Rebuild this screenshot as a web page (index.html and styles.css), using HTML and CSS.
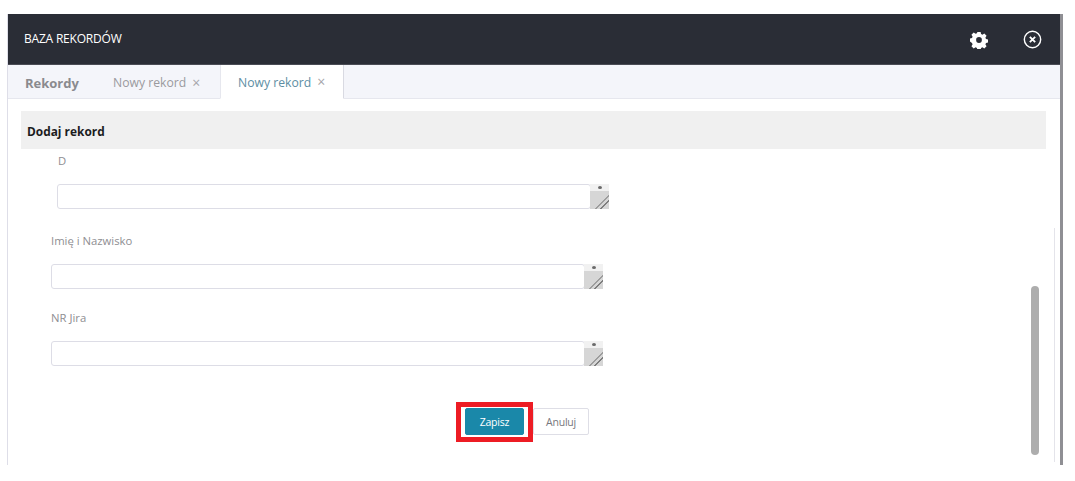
FILE: index.html
```html
<!DOCTYPE html>
<html lang="pl">
<head>
<meta charset="utf-8">
<title>Baza rekordów</title>
<link rel="stylesheet" href="styles.css">
</head>
<body>
<main class="window">
  <header class="topbar">
    <h1 class="title">BAZA REKORDÓW</h1>
    <div class="actions">
      <svg class="icon gear" viewBox="0 0 20 20" aria-label="Ustawienia">
        <path fill="#fff" fill-rule="evenodd" d="M8.2 1h3.6l.5 2.4 1.5.7 2.1-1.3 2.5 2.5-1.3 2.1.7 1.5 2.2.5v3.4l-2.2.5-.7 1.5 1.3 2.1-2.5 2.5-2.1-1.3-1.5.7-.5 2.2H8.2l-.5-2.2-1.5-.7-2.1 1.3-2.5-2.5 1.3-2.1-.7-1.5L0 11.8V8.4l2.2-.5.7-1.5-1.3-2.1 2.5-2.5 2.1 1.3 1.5-.7zM10 6.8a3.2 3.2 0 1 0 0 6.4 3.2 3.2 0 0 0 0-6.4z"/>
      </svg>
      <svg class="icon close" viewBox="0 0 20 20" aria-label="Zamknij">
        <circle cx="10" cy="10" r="8.6" fill="none" stroke="#fff" stroke-width="1.5"/>
        <path d="M7.2 7.2l5.6 5.6M12.8 7.2l-5.6 5.6" fill="none" stroke="#fff" stroke-width="1.9"/>
      </svg>
    </div>
  </header>
  <nav class="tabs">
    <span class="tab tab-main">Rekordy</span>
    <span class="tab tab-idle">Nowy rekord <span class="x">×</span></span>
    <span class="tab tab-active">Nowy rekord <span class="x">×</span></span>
  </nav>
  <section class="content">
    <h2 class="section-title">Dodaj rekord</h2>
    <div class="field field-d">
      <label class="label label-d">D</label>
      <div class="input-row">
        <div class="input"></div>
        <div class="spin"><i class="dot"></i><div class="grip"></div></div>
      </div>
    </div>
    <div class="field field-name">
      <label class="label">Imię i Nazwisko</label>
      <div class="input-row">
        <div class="input"></div>
        <div class="spin"><i class="dot"></i><div class="grip"></div></div>
      </div>
    </div>
    <div class="field field-jira">
      <label class="label">NR Jira</label>
      <div class="input-row">
        <div class="input"></div>
        <div class="spin"><i class="dot"></i><div class="grip"></div></div>
      </div>
    </div>
    <div class="buttons">
      <span class="highlight"><button class="btn btn-primary">Zapisz</button></span>
      <button class="btn btn-plain">Anuluj</button>
    </div>
    <div class="track"></div>
    <div class="thumb"></div>
  </section>
</main>
</body>
</html>
```
FILE: styles.css
```css
* { box-sizing: border-box; }
html, body { margin: 0; height: 100%; background: #fff; overflow: hidden; }
body { font-family: "Open Sans", "Liberation Sans", sans-serif; padding: 14px 0 0 7px; }

.window {
  width: 1056px;
  height: 451px;
  border-left: 1px solid #dedee8;
  border-right: 3px solid #8f8f94;
  display: flex;
  flex-direction: column;
}

.topbar {
  height: 51px;
  flex: none;
  background: #2a2d36;
  border-bottom: 1px solid #4a4c55;
  display: flex;
  align-items: center;
  justify-content: space-between;
  padding: 0 18px 2px 16px;
}
.title { margin: 0; font-size: 12px; font-weight: 400; color: #fff; letter-spacing: -0.2px; }
.actions { display: flex; align-items: center; gap: 35px; }
.icon { display: block; }
.gear { width: 18px; height: 18px; margin-top: 4px; }
.close { width: 19px; height: 19px; margin-top: 2px; }

.tabs {
  height: 34px;
  flex: none;
  background: #f4f5fa;
  border-bottom: 1px solid #e6e7ee;
  display: flex;
  font-size: 12.2px;
  color: #9a9a9e;
}
.tab { display: flex; align-items: center; gap: 6px; height: 34px; white-space: nowrap; padding-top: 1px; }
.tab-main { font-weight: 700; font-size: 13px; color: #8a8a8e; padding-left: 17px; width: 105px; }
.tab-idle { width: 107px; }
.tab-active {
  width: 124px;
  padding-left: 17px;
  background: #fff;
  color: #5d8ea3;
  border-left: 1px solid #e6e7ee;
  border-right: 1px solid #d9dae2;
  border-bottom: 1px solid #fff;
}
.x { font-size: 14px; color: #a6a6aa; line-height: 1; }

.content { position: relative; flex: 1; padding: 12px 14px 0 13px; }
.section-title {
  margin: 0;
  height: 38px;
  width: 1025px;
  background: #f0f0f0;
  font-size: 11.9px;
  font-weight: 700;
  color: #1c1c1e;
  line-height: 40px;
  padding-left: 6px;
}

.field { width: 552px; margin-left: 30px; }
.field-d { margin-left: 36px; margin-top: 4px; }
.field-name { margin-top: 24px; }
.field-jira { margin-top: 21px; }
.label { display: block; height: 16px; line-height: 16px; font-size: 11.3px; color: #8e8e92; }
.label-d { padding-left: 1px; }
.field-d .input-row { margin-top: 15px; }
.field-name .input-row { margin-top: 15px; }
.field-jira .input-row { margin-top: 15px; }

.input-row { display: flex; height: 25px; }
.input { width: 534px; height: 25px; border: 1px solid #dddde6; border-radius: 3px; background: #fff; }
.spin { width: 19px; display: flex; flex-direction: column; margin-left: -1px; }
.dot { height: 7px; background: #f1f1f1; position: relative; }
.dot::after { content: ""; position: absolute; left: 8px; top: 2px; width: 4px; height: 3px; border-radius: 50%; background: #6a6a6a; }
.grip {
  flex: 1;
  background: linear-gradient(135deg, #d6d6d6 0 60%, #9d9d9d 60% 66%, #d6d6d6 66% 74%, #7e7e7e 74% 80%, #d6d6d6 80%);
}

.buttons { display: flex; margin: 42px 0 0 435px; align-items: flex-start; }
.highlight { display: block; padding: 6px 9px 7px; margin-top: -6px; position: relative; }
.highlight::after {
  content: "";
  position: absolute;
  inset: 0;
  border: 5px solid #ed1c24;
  pointer-events: none;
}
.btn { display: block; font-family: inherit; font-size: 10.5px; height: 27px; border-radius: 2px; padding: 0; letter-spacing: -0.2px; }
.btn-primary { width: 59px; background: #1a88a9; border: 1px solid #1a88a9; color: #fff; }
.btn-plain { width: 56px; background: #fff; border: 1px solid #dedee6; color: #77777c; }

.track { position: absolute; right: 5px; top: 129px; height: 234px; width: 1px; background: #e4e4ea; }
.thumb { position: absolute; left: 1023px; top: 187px; width: 8px; height: 169px; border-radius: 4px; background: #adadad; }
```
